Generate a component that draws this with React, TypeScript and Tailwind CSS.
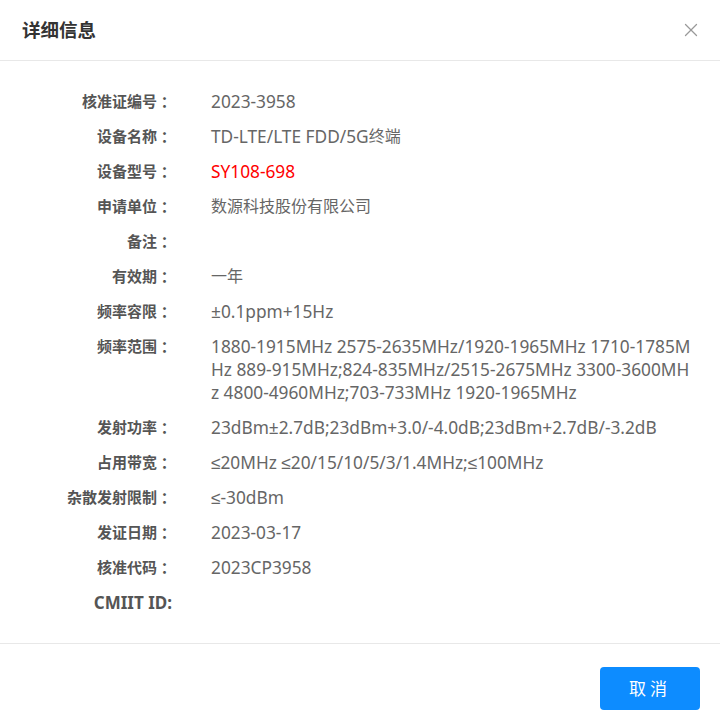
import { X } from 'lucide-react';

const rows: { label: string; value: string; red?: boolean }[] = [
  { label: '核准证编号', value: '2023-3958' },
  { label: '设备名称', value: 'TD-LTE/LTE FDD/5G终端' },
  { label: '设备型号', value: 'SY108-698', red: true },
  { label: '申请单位', value: '数源科技股份有限公司' },
  { label: '备注', value: '' },
  { label: '有效期', value: '一年' },
  { label: '频率容限', value: '±0.1ppm+15Hz' },
  {
    label: '频率范围',
    value:
      '1880-1915MHz 2575-2635MHz/1920-1965MHz 1710-1785MHz 889-915MHz;824-835MHz/2515-2675MHz 3300-3600MHz 4800-4960MHz;703-733MHz 1920-1965MHz',
  },
  { label: '发射功率', value: '23dBm±2.7dB;23dBm+3.0/-4.0dB;23dBm+2.7dB/-3.2dB' },
  { label: '占用带宽', value: '≤20MHz ≤20/15/10/5/3/1.4MHz;≤100MHz' },
  { label: '杂散发射限制', value: '≤-30dBm' },
  { label: '发证日期', value: '2023-03-17' },
  { label: '核准代码', value: '2023CP3958' },
  { label: 'CMIIT ID', value: '' },
];

const CJK = /[\u3000-\u9fff\uff00-\uffef]/;

// latin runs render a little larger than the CJK runs, as in the original page
function Mixed({ text, latin }: { text: string; latin: string }) {
  const parts = text.split(/([\u3000-\u9fff\uff00-\uffef]+)/).filter(Boolean);
  return (
    <>
      {parts.map((p, i) =>
        CJK.test(p) ? (
          <span key={i} className="align-top">
            {p}
          </span>
        ) : (
          <span key={i} className={`align-top ${latin}`}>
            {p}
          </span>
        )
      )}
    </>
  );
}

export default function App() {
  return (
    <div
      className="w-[720px] h-[725px] bg-white flex flex-col"
      style={{ fontFamily: '"Noto Sans", "Liberation Sans", "Noto Sans CJK SC", sans-serif' }}
    >
      {/* header */}
      <div className="h-[61px] shrink-0 flex items-center justify-between pl-[22px] pr-[18px] border-b border-[#e8e8e8]">
        <h1 className="text-[18.5px] font-bold text-[#333]">详细信息</h1>
        <X className="w-[22px] h-[22px] text-[#999]" strokeWidth={1.4} />
      </div>

      {/* body */}
      <div className="flex-1 pt-[23px] pr-[28px]">
        {rows.map((row, i) => {
          const latinLabel = !CJK.test(row.label);
          return (
            <div key={i} className="flex py-[6px] leading-[23px]">
              <div className="w-[172px] h-[23px] shrink-0 text-right text-[15px] font-bold text-[#555] whitespace-nowrap">
                {latinLabel ? (
                  <span className="align-top text-[17px]">{row.label}:</span>
                ) : (
                  <>
                    <span className="align-top">{row.label}</span>
                    <span className="align-top font-['Noto_Sans_CJK_JP',sans-serif]">：</span>
                  </>
                )}
              </div>
              <div
                className={`ml-[39px] flex-1 text-[16px] break-all ${row.red ? 'text-[#ff0000]' : 'text-[#666]'}`}
              >
                <Mixed text={row.value} latin="text-[17.3px]" />
              </div>
            </div>
          );
        })}
      </div>

      {/* footer */}
      <div className="h-[82px] shrink-0 border-t border-[#e8e8e8] flex items-start justify-end pt-[23px] pr-[20px]">
        <button className="w-[100px] h-[43px] rounded-[4px] bg-[#0d8cff] text-white text-[17px] tracking-[4px]">
          取消
        </button>
      </div>
    </div>
  );
}
